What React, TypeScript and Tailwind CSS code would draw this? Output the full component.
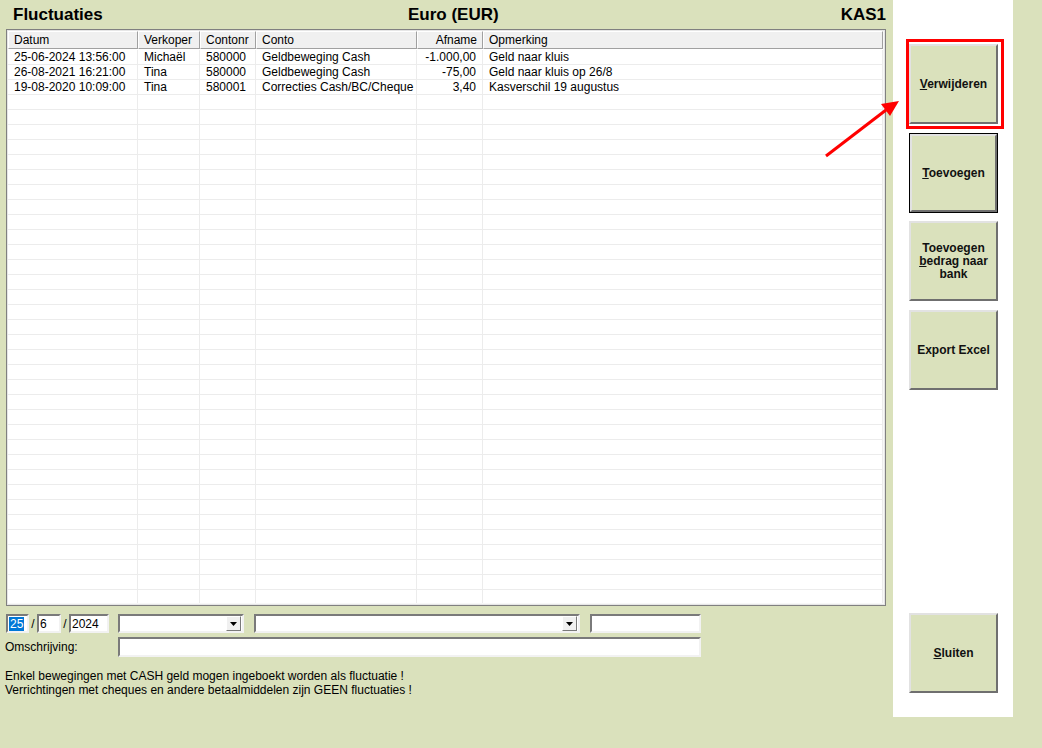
import React from "react";

const rows = [
  { datum: "25-06-2024 13:56:00", verkoper: "Michaël", contonr: "580000", conto: "Geldbeweging Cash", afname: "-1.000,00", opm: "Geld naar kluis" },
  { datum: "26-08-2021 16:21:00", verkoper: "Tina", contonr: "580000", conto: "Geldbeweging Cash", afname: "-75,00", opm: "Geld naar kluis op 26/8" },
  { datum: "19-08-2020 10:09:00", verkoper: "Tina", contonr: "580001", conto: "Correcties Cash/BC/Cheque", afname: "3,40", opm: "Kasverschil 19 augustus" },
];

const cols = "grid grid-cols-[130px_62px_56px_161px_66px_1fr]";
const sunken = "border-2 border-t-[#7a7a7a] border-l-[#7a7a7a] border-b-[#f2f2f2] border-r-[#f2f2f2] bg-white";

function HeadCell({ label, right }: { label: string; right?: boolean }) {
  return (
    <div
      className={`h-[18px] px-[5px] flex items-center border-t border-l border-t-white border-l-white border-r border-b border-r-[#a0a0a0] border-b-[#a0a0a0] bg-[#f0f0f0] ${
        right ? "justify-end" : ""
      }`}
    >
      {label}
    </div>
  );
}

function Cell({ children, right }: { children?: React.ReactNode; right?: boolean }) {
  return (
    <div
      className={`h-[15px] leading-[15px] px-[6px] border-r border-b border-[#ececec] whitespace-nowrap overflow-hidden ${
        right ? "text-right" : ""
      }`}
    >
      {children}
    </div>
  );
}

function Dropdown({ w }: { w: string }) {
  return (
    <div className={`${sunken} ${w} h-[19px] flex items-center justify-end pr-[1px]`}>
      <div className="w-[15px] h-[15px] bg-[#f0f0f0] border border-t-white border-l-white border-b-[#7a7a7a] border-r-[#7a7a7a] flex items-center justify-center">
        <svg width="7" height="4" viewBox="0 0 7 4">
          <path d="M0 0h7L3.5 4z" fill="#000" />
        </svg>
      </div>
    </div>
  );
}

function Btn({ children, focused }: { children: React.ReactNode; focused?: boolean }) {
  return (
    <div className={`w-[89px] h-[80px] ${focused ? "border border-black" : ""}`}>
      <div className="w-full h-full border-2 border-t-[#e2e2e2] border-l-[#e2e2e2] border-b-[#6f6f6f] border-r-[#6f6f6f] bg-[#dae1bc] flex items-center justify-center text-center font-bold text-[12px] leading-[13px] text-[#111]">
        {children}
      </div>
    </div>
  );
}

export default function App() {
  const empties = Array.from({ length: 34 });
  return (
    <div
      className="relative w-[1042px] h-[748px] bg-[#dae1bc] text-[12px] text-black flex overflow-hidden"
      style={{ fontFamily: '"Liberation Sans", Arial, sans-serif' }}
    >
      {/* main area */}
      <div className="w-[893px] flex flex-col">
        <div className="h-[29px] flex items-center pl-[13px] pr-[7px] font-bold text-[17px] pt-[1px]">
          <span className="w-[395px]">Fluctuaties</span>
          <span>Euro (EUR)</span>
          <span className="ml-auto">KAS1</span>
        </div>

        <div className="ml-[6px] w-[880px] h-[577px] border border-[#808080] p-[1px] bg-[#e6e6e6]">
          <div className="w-full h-full bg-white overflow-hidden border-b border-r border-[#f8f8f8]">
            <div className={cols}>
              <HeadCell label="Datum" />
              <HeadCell label="Verkoper" />
              <HeadCell label="Contonr" />
              <HeadCell label="Conto" />
              <HeadCell label="Afname" right />
              <HeadCell label="Opmerking" />
            </div>
            <div className="h-[1px]" />
            {rows.map((r) => (
              <div key={r.datum} className={cols}>
                <Cell>{r.datum}</Cell>
                <Cell>{r.verkoper}</Cell>
                <Cell>{r.contonr}</Cell>
                <Cell>{r.conto}</Cell>
                <Cell right>{r.afname}</Cell>
                <Cell>{r.opm}</Cell>
              </div>
            ))}
            {empties.map((_, i) => (
              <div key={i} className={cols}>
                <Cell />
                <Cell />
                <Cell />
                <Cell />
                <Cell />
                <Cell />
              </div>
            ))}
          </div>
        </div>

        {/* form */}
        <div className="mt-[8px] pl-[6px] flex items-center h-[19px]">
          <div className={`${sunken} w-[23px] h-[19px] flex items-center pl-[1px]`}>
            <span className="bg-[#0078d7] text-white leading-[14px] px-[1px]">25</span>
          </div>
          <span className="w-[8px] text-center">/</span>
          <div className={`${sunken} w-[24px] h-[19px] flex items-center pl-[1px]`}>6</div>
          <span className="w-[8px] text-center">/</span>
          <div className={`${sunken} w-[40px] h-[19px] flex items-center pl-[1px]`}>2024</div>
          <div className="ml-[9px]">
            <Dropdown w="w-[126px]" />
          </div>
          <div className="ml-[10px]">
            <Dropdown w="w-[326px]" />
          </div>
          <div className={`${sunken} ml-[10px] w-[111px] h-[19px]`} />
        </div>
        <div className="mt-[4px] pl-[5px] flex items-center h-[20px]">
          <span className="w-[113px]">Omschrijving:</span>
          <div className={`${sunken} w-[583px] h-[20px]`} />
        </div>
        <div className="mt-[12px] pl-[5px] leading-[14px]">
          <div>Enkel bewegingen met CASH geld mogen ingeboekt worden als fluctuatie !</div>
          <div>Verrichtingen met cheques en andere betaalmiddelen zijn GEEN fluctuaties !</div>
        </div>
      </div>

      {/* right panel */}
      <div className="w-[120px] h-[717px] bg-white flex flex-col pl-[16px] pt-[44px] pb-[24px]">
        <div className="relative">
          <div className="absolute -left-[3px] -top-[5px] w-[98px] h-[90px] border-[3px] border-[#ff0000]" />
          <Btn>
            <span>
              <span className="underline">V</span>erwijderen
            </span>
          </Btn>
        </div>
        <div className="mt-[9px]">
          <Btn focused>
            <span>
              <span className="underline">T</span>oevoegen
            </span>
          </Btn>
        </div>
        <div className="mt-[8px]">
          <Btn>
            <span>
              Toevoegen
              <br />
              <span className="underline">b</span>edrag naar
              <br />
              bank
            </span>
          </Btn>
        </div>
        <div className="mt-[9px]">
          <Btn>Export Excel</Btn>
        </div>
        <div className="mt-auto">
          <Btn>
            <span>
              <span className="underline">S</span>luiten
            </span>
          </Btn>
        </div>
      </div>

      {/* annotation arrow */}
      <svg className="absolute left-0 top-0 pointer-events-none" width="1042" height="748">
        <line x1="826" y1="156" x2="886" y2="110" stroke="#ff0000" strokeWidth="3" />
        <path d="M899 101 L881 104 L890 116 Z" fill="#ff0000" />
      </svg>
    </div>
  );
}
